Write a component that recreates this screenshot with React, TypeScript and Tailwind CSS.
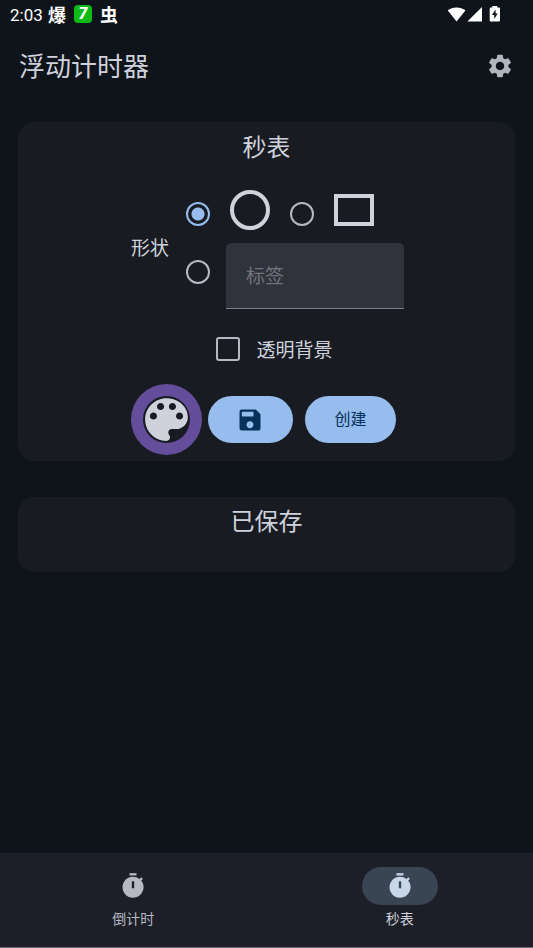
import { useState } from "react";
import { MdSave, MdSettings } from "react-icons/md";

function StatusBar() {
  return (
    <div className="flex h-7 items-center justify-between pl-2.5 pr-8 text-white">
      <div className="flex items-center gap-2">
        <span className="w-8 pt-0.5 font-[Roboto,sans-serif] text-[17px] leading-5">2:03</span>
        <span className="-ml-0.5 text-lg font-bold leading-5">爆</span>
        <span className="flex size-4.5 items-center justify-center rounded bg-[#0cbb16] font-[Roboto,sans-serif] text-base font-black italic leading-4">
          7
        </span>
        <span className="text-lg font-bold leading-5">虫</span>
      </div>
      <svg className="h-4 w-[54px]" viewBox="0 0 54 16" fill="currentColor" aria-hidden="true">
        <path d="M0.8 4.6 C5 0.3 14 0.3 18.4 4.6 L9.6 15.4 Z" />
        <path d="M35 1 V15.4 H20.4 Z" />
        <path
          fillRule="evenodd"
          d="M45.3 0 h5 v1.4 h1.7 a1 1 0 0 1 1 1 v12 a1 1 0 0 1 -1 1 h-8.300 a1 1 0 0 1 -1 -1 v-12 a1 1 0 0 1 1 -1 h1.600 z M48.600 3.400 l-3.600 5.500 h2.300 v4 l3.400 -5.400 h-2.100 z"
        />
      </svg>
    </div>
  );
}

function PaletteIcon() {
  return (
    <svg className="size-[57px]" viewBox="0 0 24 24" aria-hidden="true">
      <circle cx="12" cy="12" r="9.9" fill="#181c22" />
      <path
        fill="#cfd2dd"
        d="M12 3c-4.970 0-9 4.030-9 9s4.030 9 9 9c.83 0 1.500-.67 1.500-1.500 0-.39-.15-.74-.39-1.010-.23-.26-.38-.61-.38-.99 0-.83.67-1.500 1.500-1.500H16c2.760 0 5-2.240 5-5 0-4.420-4.030-8-9-8zm-5.500 9c-.83 0-1.500-.67-1.500-1.500S5.670 9 6.500 9 8 9.670 8 10.500 7.330 12 6.500 12zm3-4C8.670 8 8 7.330 8 6.500S8.670 5 9.500 5s1.500.67 1.500 1.500S10.330 8 9.500 8zm5 0c-.83 0-1.500-.67-1.500-1.500S13.670 5 14.500 5s1.500.67 1.500 1.500S15.330 8 14.500 8zm3 4c-.83 0-1.500-.67-1.500-1.500S16.670 9 17.500 9s1.500.67 1.500 1.500-.67 1.500-1.500 1.500z"
      />
    </svg>
  );
}

function StopwatchIcon() {
  return (
    <svg className="size-7" viewBox="0 0 24 24" fill="currentColor" aria-hidden="true">
      <path d="M9 1h6v2H9z" />
      <path
        fillRule="evenodd"
        d="M19.030 7.390l1.420-1.420c-.43-.51-.9-.99-1.410-1.410l-1.420 1.420A8.962 8.962 0 0 0 12 4c-4.970 0-9 4.030-9 9s4.020 9 9 9a8.994 8.994 0 0 0 7.030-14.610zM11 8h2v6h-2z"
      />
    </svg>
  );
}

type Shape = "circle" | "rect" | "label";

function ShapeRadio({
  value,
  label,
  shape,
  onChange,
  className,
}: {
  value: Shape;
  label: string;
  shape: Shape;
  onChange: (s: Shape) => void;
  className: string;
}) {
  return (
    <input
      type="radio"
      name="shape"
      id={"shape-" + value}
      aria-label={label}
      checked={shape === value}
      onChange={() => onChange(value)}
      className={
        "size-6 shrink-0 appearance-none rounded-full border-2 border-[#b6b9c3] checked:border-[#96bdee] checked:bg-[radial-gradient(circle,#96bdee_6px,transparent_7px)] " +
        className
      }
    />
  );
}

function NavItem({ label, active, onClick }: { label: string; active: boolean; onClick: () => void }) {
  return (
    <button
      type="button"
      onClick={onClick}
      aria-current={active ? "page" : undefined}
      className={"flex flex-1 flex-col items-center gap-[3px] " + (active ? "text-[#cdd0da]" : "text-[#b6b9c3]")}
    >
      <span
        className={
          "flex h-[38px] w-[76px] items-center justify-center rounded-full " +
          (active ? "bg-[#3a4554] text-[#c8d6ea]" : "")
        }
      >
        <StopwatchIcon />
      </span>
      <span className="text-sm leading-5">{label}</span>
    </button>
  );
}

export default function App() {
  const [shape, setShape] = useState<Shape>("circle");
  const [transparent, setTransparent] = useState(false);
  const [tab, setTab] = useState("stopwatch");

  return (
    <div className="flex min-h-screen flex-col bg-[#0f141b] font-['Noto_Sans_CJK_SC',sans-serif] text-[#cfd2dd]">
      <StatusBar />
      <header className="flex h-[76px] items-center justify-between px-[19px]">
        <h1 className="pb-0.5 text-[26px] leading-9">浮动计时器</h1>
        <button type="button" aria-label="设置" className="text-[#b1b5bf]">
          <MdSettings className="size-7" />
        </button>
      </header>

      <main className="flex flex-1 flex-col gap-9 px-4.5 pt-4.5">
        <section className="flex flex-col items-center rounded-2xl bg-[#181c22] pb-1.5 pt-2">
          <h2 className="text-2xl leading-8">秒表</h2>
          <div className="mt-7 flex flex-col pl-0.5">
            <div role="radiogroup" aria-labelledby="shape-title" className="flex items-center gap-[17px]">
              <span id="shape-title" className="pb-1.5 text-[19px] leading-6">
                形状
              </span>
              <div className="flex flex-col gap-[13px]">
                <div className="flex items-center gap-5">
                  <ShapeRadio value="circle" label="圆形" shape={shape} onChange={setShape} className="mt-2" />
                  <label htmlFor="shape-circle" className="size-10 rounded-full border-4 border-[#cfd2dd]" />
                  <ShapeRadio value="rect" label="矩形" shape={shape} onChange={setShape} className="mt-2" />
                  <label htmlFor="shape-rect" className="h-8 w-10 border-4 border-[#cfd2dd]" />
                </div>
                <div className="flex items-center gap-4">
                  <ShapeRadio value="label" label="标签" shape={shape} onChange={setShape} className="mb-2" />
                  <input
                    type="text"
                    aria-label="标签"
                    placeholder="标签"
                    className="h-[66px] w-[178px] rounded-t-[5px] border-b border-[#7c7f87] bg-[#30333b] px-5 pb-0.5 text-[19px] outline-none placeholder:text-[#70737b]"
                  />
                </div>
              </div>
            </div>
            <label className="mt-7 flex items-center justify-center gap-4 pl-3.5 text-[19px] leading-6">
              <input
                type="checkbox"
                checked={transparent}
                onChange={(e) => setTransparent(e.target.checked)}
                className="size-6 appearance-none rounded-[3px] border-2 border-[#b6b9c3] checked:bg-[#96bdee]"
              />
              透明背景
            </label>
            <div className="mt-[23px] flex items-center">
              <button
                type="button"
                aria-label="颜色"
                className="flex size-[71px] items-center justify-center rounded-full bg-[#644d9b]"
              >
                <PaletteIcon />
              </button>
              <button
                type="button"
                aria-label="保存"
                className="ml-1.5 flex h-[47px] w-[85px] items-center justify-center rounded-full bg-[#96bdee] text-[#06315a]"
              >
                <MdSave className="size-7" />
              </button>
              <button
                type="button"
                className="ml-3 h-[47px] w-[91px] rounded-full bg-[#96bdee] pb-1 text-base leading-6 text-[#06315a]"
              >
                创建
              </button>
            </div>
          </div>
        </section>

        <section className="rounded-2xl bg-[#181c22] pb-9 pt-[7px] text-center">
          <h2 className="text-2xl leading-8">已保存</h2>
        </section>
      </main>

      <nav className="flex border-b border-[#6d6c71] bg-[#1c1f27] pb-[19px] pt-3.5">
        <NavItem label="倒计时" active={tab === "countdown"} onClick={() => setTab("countdown")} />
        <NavItem label="秒表" active={tab === "stopwatch"} onClick={() => setTab("stopwatch")} />
      </nav>
    </div>
  );
}
